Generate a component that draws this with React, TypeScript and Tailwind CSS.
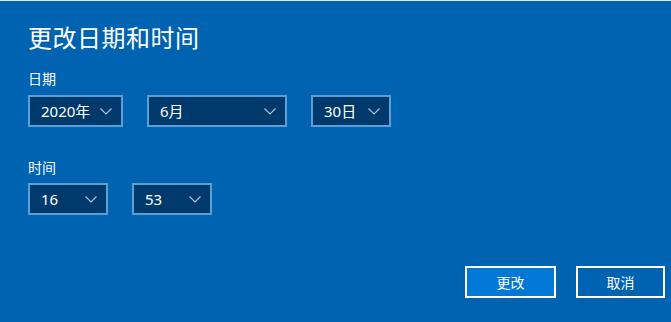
const font = { fontFamily: '"Noto Sans", "Noto Sans CJK SC", sans-serif' };

function Chevron() {
  return (
    <svg width="12" height="7" viewBox="0 0 12 7" fill="none" aria-hidden="true">
      <polyline points="0.5,0.5 6,6 11.5,0.5" stroke="#a9c7e2" strokeWidth="1.1" />
    </svg>
  );
}

function Select({ value, width }: { value: string; width: string }) {
  return (
    <div
      className={`flex h-8 items-center justify-between border-2 border-[#5b9fd6] bg-[#003a6c] pl-[11px] pr-[9px] text-[15px] text-white ${width}`}
    >
      <span className="leading-none">{value}</span>
      <Chevron />
    </div>
  );
}

export default function App() {
  return (
    <div
      className="flex h-[322px] w-[671px] flex-col border-t border-[#e4eaf0] bg-[#0063b1] pl-[28px] pr-[6px] pt-[21px] text-white"
      style={font}
    >
      <h1 className="text-[24px] leading-[32px] tracking-[0.5px]">更改日期和时间</h1>

      <p className="mt-[15px] text-[14px] leading-[20px]">日期</p>
      <div className="mt-[6px] flex gap-6">
        <Select value="2020年" width="w-[95px]" />
        <Select value="6月" width="w-[140px]" />
        <Select value="30日" width="w-[80px]" />
      </div>

      <p className="mt-[31px] text-[14px] leading-[20px]">时间</p>
      <div className="mt-[5px] flex gap-6">
        <Select value="16" width="w-[80px]" />
        <Select value="53" width="w-[80px]" />
      </div>

      <div className="mt-auto mb-[24px] flex justify-end gap-5">
        <button className="h-8 w-[91px] border-2 border-white bg-[#0078d7] text-[14px] text-white">更改</button>
        <button className="h-8 w-[89px] border-2 border-white bg-[#0063b1] text-[14px] text-white">取消</button>
      </div>
    </div>
  );
}
